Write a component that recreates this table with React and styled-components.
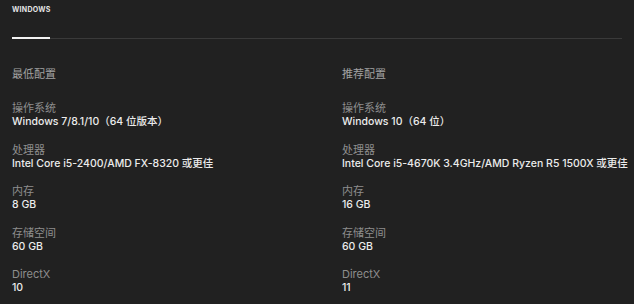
import styled, { createGlobalStyle } from 'styled-components';

const GlobalStyle = createGlobalStyle`
  html, body {
    margin: 0;
    padding: 0;
    background: #212121;
  }
  body {
    font-family: Inter, "Noto Sans CJK SC", sans-serif;
    -webkit-font-smoothing: antialiased;
  }
`;

const specs = {
  min: {
    title: '最低配置',
    rows: [
      ['操作系统', 'Windows 7/8.1/10（64 位版本）'],
      ['处理器', 'Intel Core i5-2400/AMD FX-8320 或更佳'],
      ['内存', '8 GB'],
      ['存储空间', '60 GB'],
      ['DirectX', '10'],
    ],
  },
  rec: {
    title: '推荐配置',
    rows: [
      ['操作系统', 'Windows 10（64 位）'],
      ['处理器', 'Intel Core i5-4670K 3.4GHz/AMD Ryzen R5 1500X 或更佳'],
      ['内存', '16 GB'],
      ['存储空间', '60 GB'],
      ['DirectX', '11'],
    ],
  },
};

const App = () => {
  return (
    <Page>
      <GlobalStyle />
      <Tabs>
        <Tab active>WINDOWS</Tab>
      </Tabs>
      <Columns>
        {[specs.min, specs.rec].map((col) => (
          <Column key={col.title}>
            <Heading>{col.title}</Heading>
            {col.rows.map(([label, value]) => (
              <Spec key={label}>
                <Label>{label}</Label>
                <Value>{value}</Value>
              </Spec>
            ))}
          </Column>
        ))}
      </Columns>
    </Page>
  );
};

const Page = styled.div`
  width: 634px;
  height: 304px;
  background: #212121;
  padding: 0 12px;
  box-sizing: border-box;
  overflow: hidden;
`;

const Tabs = styled.div`
  display: flex;
  border-bottom: 1px solid #3a3a3a;
  height: 38px;
`;

const Tab = styled.div`
  width: 38px;
  padding-top: 5px;
  font-size: 7px;
  font-weight: 700;
  letter-spacing: 0.3px;
  color: #e4e4e4;
  position: relative;
  &::after {
    content: '';
    position: absolute;
    left: 0;
    right: 0;
    bottom: -1px;
    height: 2px;
    background: ${(p) => (p.active ? '#f2f2f2' : 'transparent')};
  }
`;

const Columns = styled.div`
  display: grid;
  grid-template-columns: 330px 1fr;
  padding-top: 28px;
`;

const Column = styled.div`
  display: flex;
  flex-direction: column;
`;

const Heading = styled.div`
  font-size: 11px;
  line-height: 14px;
  color: #a2a2a2;
  margin-bottom: 20px;
`;

const Spec = styled.div`
  display: flex;
  flex-direction: column;
  margin-bottom: 13.6px;
`;

const Label = styled.div`
  font-size: 11px;
  line-height: 14px;
  color: #8e8e8e;
`;

const Value = styled.div`
  font-size: 10.5px;
  line-height: 14px;
  color: #ececec;
  font-weight: 500;
  white-space: nowrap;
`;

export default App;
